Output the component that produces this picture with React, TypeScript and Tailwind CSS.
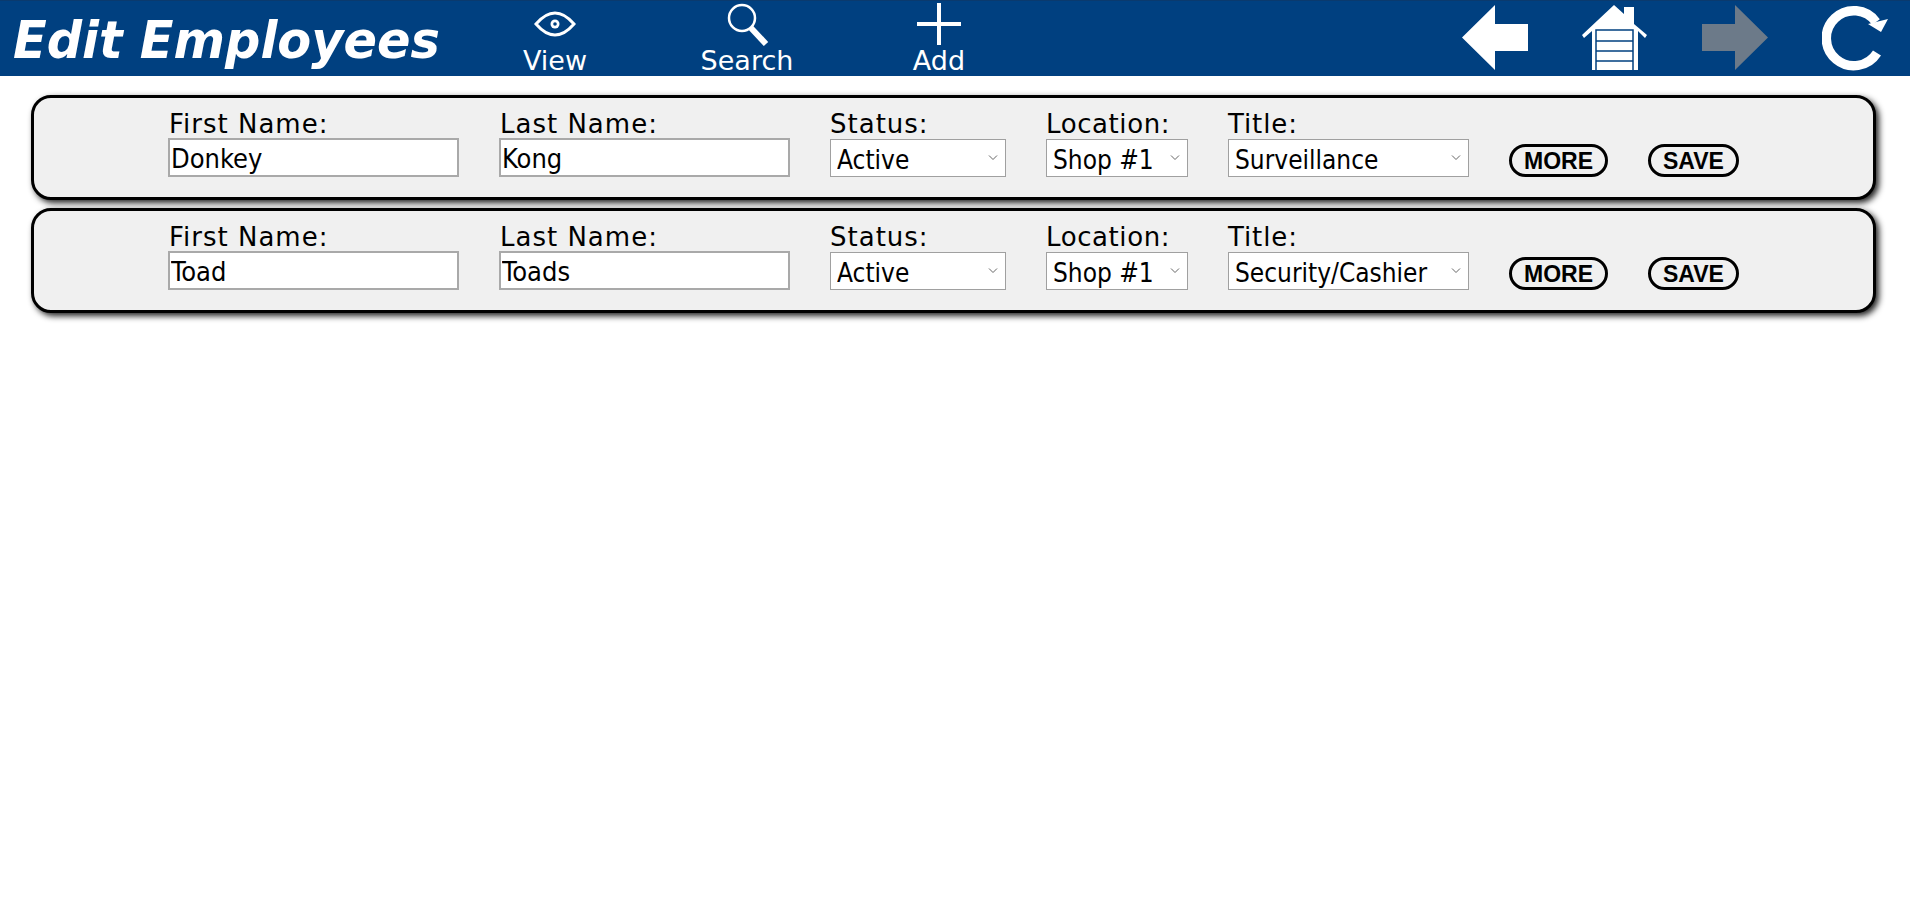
import React from "react";

const sans = "font-['DejaVu_Sans_Condensed','DejaVu_Sans',sans-serif]";
const wide = "font-['DejaVu_Sans',sans-serif]";

function Chevron() {
  return (
    <svg className="absolute right-[8px] top-[15px] pointer-events-none" width="10" height="7" viewBox="0 0 10 7" fill="none">
      <path d="M1 1.5 L5 5.5 L9 1.5" stroke="#666" strokeWidth="1" />
    </svg>
  );
}

function TextField({ label, value }: { label: string; value: string }) {
  return (
    <div className="flex w-[291px] flex-col">
      <label className={`h-[30px] pl-[1px] pt-[1px] text-[26px] leading-[30px] tracking-[1px] text-black whitespace-nowrap ${wide}`}>{label}</label>
      <input
        defaultValue={value}
        className="h-[39px] w-full border-2 border-[#a9a9a9] bg-white px-[1px] pt-[4px] text-[27px] text-black outline-none"
      />
    </div>
  );
}

function SelectField({ label, value, w, tracking }: { label: string; value: string; w: string; tracking: string }) {
  return (
    <div className={`flex flex-col ${w}`}>
      <label className={`h-[31px] pt-[1px] text-[26px] leading-[30px] text-black whitespace-nowrap ${wide} ${tracking}`}>{label}</label>
      <div className="relative">
        <select
          defaultValue={value}
          className="h-[38px] w-full appearance-none border border-[#a0a0a0] bg-white pl-[6px] pt-[3px] text-[26px] leading-[34px] text-black outline-none"
        >
          <option>{value}</option>
        </select>
        <Chevron />
      </div>
    </div>
  );
}

function Pill({ text, w }: { text: string; w: string }) {
  return (
    <button className={`h-[33px] ${w} rounded-full border-[3px] border-black bg-[#f0f0f0] font-['Liberation_Sans',sans-serif] text-[23px] leading-[24px] font-bold text-black`}>
      {text}
    </button>
  );
}

function Card({ first, last, title }: { first: string; last: string; title: string }) {
  return (
    <div className="flex h-[105px] items-start gap-[40px] rounded-[20px] border-[3px] border-black bg-[#f0f0f0] pl-[134px] pt-[10px] shadow-[3px_3px_6px_#222]">
      <TextField label="First Name:" value={first} />
      <TextField label="Last Name:" value={last} />
      <SelectField label="Status:" value="Active" w="w-[176px]" tracking="tracking-[1px]" />
      <SelectField label="Location:" value="Shop #1" w="w-[142px]" tracking="tracking-[0.6px]" />
      <SelectField label="Title:" value={title} w="w-[241px]" tracking="tracking-[0.9px]" />
      <div className="flex gap-[40px] pt-[36px]">
        <Pill text="MORE" w="w-[99px]" />
        <Pill text="SAVE" w="w-[91px]" />
      </div>
    </div>
  );
}

function NavItem({ label, children }: { label: string; children: React.ReactNode }) {
  return (
    <div className="flex w-[192px] flex-col items-center">
      <div className="flex h-[45px] items-center justify-center">{children}</div>
      <span className={`text-[27px] leading-[29px] text-white ${wide}`}>{label}</span>
    </div>
  );
}

export default function App() {
  return (
    <div className={`min-h-[906px] bg-white ${sans}`}>
      <header className="flex h-[76px] items-start border-t border-[#0a3a6e] bg-[#004080]">
        <h1 className="w-[459px] pl-[13px] pt-[8px] text-[52px] leading-[62px] font-bold italic text-white font-['DejaVu_Sans',sans-serif] whitespace-nowrap">
          <span className="inline-block origin-left scale-x-[0.95]">Edit Employees</span>
        </h1>
        <NavItem label="View">
          <svg width="42" height="28" viewBox="0 0 42 28" fill="none" stroke="white">
            <path d="M2 14 Q21 -8 40 14 Q21 36 2 14 Z" strokeWidth="3" />
            <circle cx="21" cy="14" r="4.5" fill="white" stroke="none" />
            <circle cx="21" cy="14" r="1.8" fill="#004080" stroke="none" />
          </svg>
        </NavItem>
        <NavItem label="Search">
          <svg width="44" height="44" viewBox="0 0 44 44" fill="none" stroke="white">
            <circle cx="17" cy="16" r="13" strokeWidth="2.5" />
            <path d="M26 26 L41 42" strokeWidth="6" />
          </svg>
        </NavItem>
        <NavItem label="Add">
          <svg width="44" height="44" viewBox="0 0 44 44" stroke="white" strokeWidth="4">
            <path d="M22 1 V43 M0 22 H44" />
          </svg>
        </NavItem>
        <div className="ml-auto flex gap-[54px] pr-[22px] pt-[4px]">
          <svg width="66" height="65" viewBox="0 0 66 65" fill="white">
            <path d="M0 32.5 L33 0 V19 H66 V46 H33 V65 Z" />
          </svg>
          <svg width="66" height="65" viewBox="0 0 66 65">
            <path d="M0 30 L32 0 L42 9 V2 H52 V19 L65 30 L63 33 L56 26 V65 H10 V26 L2 33 Z" fill="white" />
            <path d="M14 65 V25 H51 V65 M14 36 H51 M14 46 H51 M14 56 H51" stroke="#004080" strokeWidth="1.5" fill="none" />
          </svg>
          <svg width="66" height="65" viewBox="0 0 66 65" fill="#6c7a89">
            <path d="M66 32.5 L33 0 V19 H0 V46 H33 V65 Z" />
          </svg>
          <svg width="66" height="66" viewBox="0 0 66 66" fill="none">
            <path d="M54 17 A27.5 27.5 0 1 0 55 48" stroke="white" strokeWidth="9.5" />
            <path d="M46 19 L66 14 L59 27 Z" fill="white" />
          </svg>
        </div>
      </header>
      <main className="flex flex-col gap-[8px] pl-[31px] pr-[34px] pt-[19px]">
        <Card first="Donkey" last="Kong" title="Surveillance" />
        <Card first="Toad" last="Toads" title="Security/Cashier" />
      </main>
    </div>
  );
}
